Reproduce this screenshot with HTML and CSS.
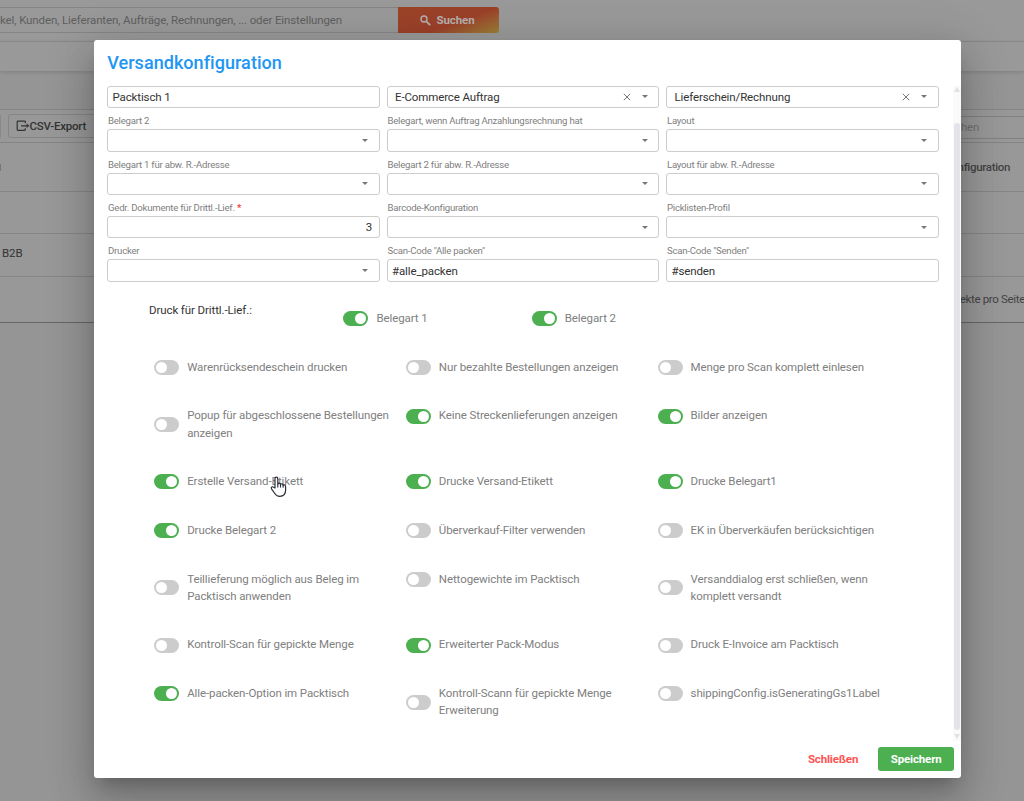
FILE: index.html
```html
<!DOCTYPE html>
<html lang="de">
<head>
<meta charset="utf-8">
<title>Versandkonfiguration</title>
<link rel="stylesheet" href="styles.css">
</head>
<body>
<div class="page">
  <header class="topbar">
    <div class="search-input"><span class="t-search">kel, Kunden, Lieferanten, Aufträge, Rechnungen, ... oder Einstellungen</span></div>
    <div class="search-btn">
      <svg width="11" height="11" viewBox="0 0 11 11"><circle cx="4" cy="4" r="3" fill="none" stroke="currentColor" stroke-width="1.4"/><path d="M6.3 6.3 10.2 10.2" stroke="currentColor" stroke-width="1.7"/></svg>
      <span>Suchen</span>
    </div>
  </header>
  <div class="subbar"></div>
  <div class="spacer"></div>
  <div class="tools">
    <div class="btn-stub"></div>
    <div class="csv-btn">
      <svg width="14" height="12" viewBox="0 0 14 12" fill="none" stroke="currentColor" stroke-width="1.2"><path d="M9.3 3.2V1.8Q9.3 1.1 8.6 1.1H1.9Q1.2 1.1 1.2 1.8V9.6Q1.2 10.3 1.9 10.3H8.6Q9.3 10.3 9.3 9.6V8.3M5 5.8H12"/><path d="M10.6 3.6 13.4 5.8 10.6 8Z" fill="currentColor" stroke="none"/></svg>
      <span>CSV-Export</span>
    </div>
    <div class="table-search">Suchen</div>
  </div>
  <div class="row row-head"><i class="edge-mark"></i><b class="col-title">Konfiguration</b></div>
  <div class="row row-a"></div>
  <div class="row row-b"><span>B2B</span></div>
  <div class="row row-foot"><span class="per-page">Objekte pro Seite</span></div>
</div>

<div class="overlay">
  <section class="modal">
    <h1>Versandkonfiguration</h1>
    <div class="body">
      <div class="content">
        <div class="fields" id="fields"></div>
        <div class="third">
          <span class="third-title">Druck für Drittl.-Lief.:</span>
          <div class="opt"><i class="switch on"></i><span>Belegart 1</span></div>
          <div class="opt"><i class="switch on"></i><span>Belegart 2</span></div>
        </div>
        <div class="options" id="options"></div>
      </div>
      <div class="scrollbar"><i class="up"></i><i class="thumb"></i><i class="down"></i></div>
    </div>
    <footer><span class="close">Schließen</span><span class="save">Speichern</span></footer>
  </section>
</div>
<svg class="pointer" width="18" height="22" viewBox="0 0 18 22"><path d="M5 12V3Q5 1.2 6.4 1.2T7.8 3V8.5Q8 7 9.2 7.1T10.5 8.7Q10.8 7.6 12 7.8T13.1 9.5Q13.4 8.6 14.4 8.8T15.6 10.5V14Q15.6 20.3 9.8 20.3Q6.5 20.3 4.8 17.5L1.5 12.8Q.9 11.6 1.8 11T3.7 11.2Z" fill="#fff" stroke="#2a2a38" stroke-width="1.2" stroke-linejoin="round"/><path d="M7.8 8.5V11.5M10.5 8.7V11.5M13.1 9.5V11.8" stroke="#2a2a38" stroke-width="1.1"/></svg>
<script src="app.js"></script>
</body>
</html>
```
FILE: styles.css
```css
* { box-sizing: border-box; }
body { margin: 0; font-family: Roboto, sans-serif; font-size: 11.5px; letter-spacing: -.1px; color: #333; background: #959595; overflow: hidden; }
.page { width: 1024px; height: 801px; overflow: hidden; background: #959595; }

.topbar { height: 42px; padding-top: 7px; display: flex; background: #999; border-bottom: 1px solid #8b8b8b; }
.search-input { width: 398px; height: 26px; border: solid #858585; border-width: 1px 0; line-height: 24px; color: #5f5f5f; white-space: nowrap; }
.search-btn { width: 101px; height: 26px; border-radius: 0 3px 3px 0; background: linear-gradient(160deg, #9b4429 0%, #9b4029 58%, #9b8038 100%); color: #b5b0ae; font-weight: 700; display: flex; align-items: center; justify-content: center; gap: 5px; padding-right: 2px; }
.t-search { letter-spacing: -.12px; }
.subbar { height: 29px; background: #999; box-shadow: 0 1px 4px rgba(0,0,0,.16); }
.spacer { height: 38px; }
.tools { height: 34px; border: solid #848484; border-width: 1px 0; display: flex; align-items: center; background: #989898; }
.btn-stub { width: 1px; height: 23px; background: #888; margin-right: 7px; }
.csv-btn { width: 100px; height: 24px; border: 1px solid #858585; border-radius: 3px; padding-left: 6.5px; display: flex; align-items: center; font-weight: 500; letter-spacing: -.22px; color: #333; }
.table-search { margin-left: auto; width: 104px; height: 23px; margin-top: 3px; border: solid #808080; border-width: 1px 0; line-height: 21px; padding-left: 22px; color: #707070; }
.row { border-bottom: 1px solid #858585; display: flex; align-items: center; background: #989898; }
.row-head { height: 49px; color: #444; }
.edge-mark { width: 1px; height: 7px; background: #777; }
.col-title { margin-left: auto; margin-right: 14px; font-weight: 500; letter-spacing: -.33px; }
.row-a { height: 42px; }
.row-b { height: 43px; padding: 0 0 5px 2px; }
.row-foot { height: 46px; border-color: #666; justify-content: flex-end; color: #444; }
.per-page { white-space: nowrap; margin-right: -1px; padding-bottom: 1px; letter-spacing: -.33px; }

.overlay { position: absolute; left: 0; top: 0; width: 1024px; height: 801px; padding: 40px 0 0 93.7px; overflow: hidden; }
.modal { width: 867.5px; height: 738.3px; border-radius: 3px; background: #fff; display: flex; flex-direction: column; box-shadow: 0 11px 15px -7px rgba(0,0,0,.2), 0 24px 38px 3px rgba(0,0,0,.14), 0 9px 46px 8px rgba(0,0,0,.12); }
h1 { margin: 0; height: 45.6px; flex: none; padding-left: 13.5px; line-height: 45px; font-size: 18px; font-weight: 500; color: #2196f3; letter-spacing: .05px; }
.body { height: 655px; flex: none; display: flex; }
.content { width: 859.5px; padding-left: 13.8px; }
.fields { display: grid; grid-template-columns: repeat(3, 272.5px); column-gap: 7px; }
.field { height: 43.4px; display: flex; flex-direction: column; }
.field:nth-child(-n+3) { height: 22.7px; }
.field:nth-child(-n+3) .label { display: none; }
.label { height: 20.9px; padding: 5px 0 0 .5px; line-height: 16px; font-size: 9.6px; letter-spacing: -.23px; color: #808080; white-space: nowrap; }
.label b { color: #f44336; }
.control { height: 22.5px; flex: none; border: 1px solid #ccc; border-radius: 3px; display: flex; align-items: center; padding: 0 4px; color: #333; letter-spacing: -.12px; }
.control.select { padding: 0 10.5px 0 7px; }
.control .x { margin-left: auto; margin-right: 11px; }
.control .caret { width: 0; border: 3px solid transparent; border-top-color: #777; border-bottom: 0; margin-left: auto; }
.control .x + .caret { margin-left: 0; }
.control.num { justify-content: flex-end; padding-right: 7px; }

.third { height: 68px; padding: 20.5px 0 0 41.5px; display: flex; align-items: flex-start; }
.third-title { width: 194.5px; line-height: 17px; color: #333; }
.third .opt { width: 188.3px; margin-top: 7px; }
.opt { display: flex; align-items: center; color: #808080; line-height: 17.3px; white-space: nowrap; }
.opt span { padding-top: 1px; }
.switch { flex: none; width: 25px; height: 15px; border-radius: 8px; background: #ccc; margin: 1px 8px 0 0; padding: 2px; display: flex; }
.switch::before { content: ""; width: 11px; height: 11px; border-radius: 50%; background: #fff; }
.switch.on { background: #4caf50; justify-content: flex-end; }
.options { padding: 8px 0 0 46.7px; display: grid; grid-template-columns: repeat(3, 251.7px); row-gap: 30.3px; align-items: start; }

.scrollbar { width: 8px; padding-top: 1.4px; background: #fafafa; display: flex; flex-direction: column; align-items: center; }
.scrollbar .up { border: 3px solid transparent; border-top: 0; border-bottom: 5px solid #dfe1e5; }
.scrollbar .thumb { width: 6px; height: 607px; margin-top: 31px; border-radius: 3px; background: #e2e4ea; }
.scrollbar .down { margin-top: 4px; border: 3px solid transparent; border-bottom: 0; border-top: 5px solid #dfe1e5; }
footer { display: flex; justify-content: flex-end; align-items: center; padding: 1px 7px 0 0; gap: 20px; font-weight: 700; height: 36px; flex: none; letter-spacing: -.16px; }
.close { color: #ff5252; }
.save { width: 76px; height: 24px; line-height: 24px; border-radius: 3px; background: #4caf50; color: #fff; text-align: center; }
.pointer { position: absolute; left: 270px; top: 476px; }
```
FILE: app.js
```js
const fields = [
  ['', 'text', 'Packtisch 1'], ['', 'select', 'E-Commerce Auftrag'], ['', 'select', 'Lieferschein/Rechnung'],
  ['Belegart 2', 'select', ''], ['Belegart, wenn Auftrag Anzahlungsrechnung hat', 'select', ''], ['Layout', 'select', ''],
  ['Belegart 1 für abw. R.-Adresse', 'select', ''], ['Belegart 2 für abw. R.-Adresse', 'select', ''], ['Layout für abw. R.-Adresse', 'select', ''],
  ['Gedr. Dokumente für Drittl.-Lief. <b>*</b>', 'num', '3'], ['Barcode-Konfiguration', 'select', ''], ['Picklisten-Profil', 'select', ''],
  ['Drucker', 'select', ''], ['Scan-Code "Alle packen"', 'text', '#alle_packen'], ['Scan-Code "Senden"', 'text', '#senden']
];
const cross = '<svg class="x" width="8" height="8" viewBox="0 0 8 8"><path d="M.8.8 7.2 7.2M7.2.8.8 7.2" stroke="#777" stroke-width="1"/></svg>';
document.getElementById('fields').innerHTML = fields.map(([label, kind, value]) =>
  `<div class="field"><div class="label">${label}</div><div class="control ${kind}"><span>${value}</span>${
    kind === 'select' ? (value ? cross : '') + '<i class="caret"></i>' : ''}</div></div>`).join('');

const options = [
  ['Warenrücksendeschein drucken', 0], ['Nur bezahlte Bestellungen anzeigen', 0], ['Menge pro Scan komplett einlesen', 0],
  ['Popup für abgeschlossene Bestellungen<br>anzeigen', 0], ['Keine Streckenlieferungen anzeigen', 1], ['Bilder anzeigen', 1],
  ['Erstelle Versand-Etikett', 1], ['Drucke Versand-Etikett', 1], ['Drucke Belegart1', 1],
  ['Drucke Belegart 2', 1], ['Überverkauf-Filter verwenden', 0], ['EK in Überverkäufen berücksichtigen', 0],
  ['Teillieferung möglich aus Beleg im<br>Packtisch anwenden', 0], ['Nettogewichte im Packtisch', 0], ['Versanddialog erst schließen, wenn<br>komplett versandt', 0],
  ['Kontroll-Scan für gepickte Menge', 0], ['Erweiterter Pack-Modus', 1], ['Druck E-Invoice am Packtisch', 0],
  ['Alle-packen-Option im Packtisch', 1], ['Kontroll-Scann für gepickte Menge<br>Erweiterung', 0], ['shippingConfig.isGeneratingGs1Label', 0]
];
document.getElementById('options').innerHTML = options.map(([text, on]) =>
  `<div class="opt"><i class="switch${on ? ' on' : ''}"></i><span>${text}</span></div>`).join('');
```
